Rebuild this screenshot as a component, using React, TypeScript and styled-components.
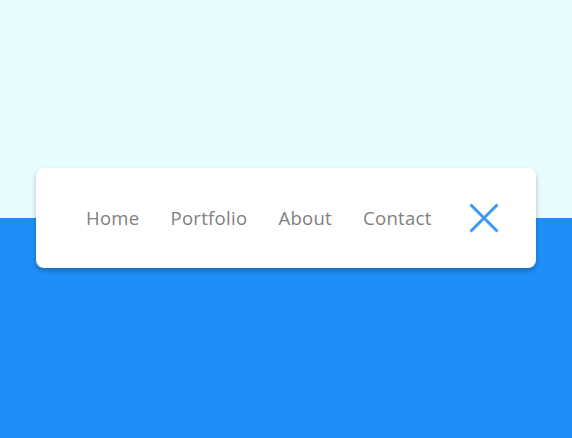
import React from "react";
import styled, { createGlobalStyle } from "styled-components";

const GlobalStyle = createGlobalStyle`
  html, body {
    margin: 0;
    padding: 0;
  }
  body {
    font-family: "Open Sans", "Liberation Sans", Arial, sans-serif;
  }
`;

const Page = styled.div`
  width: 572px;
  height: 438px;
  box-sizing: border-box;
  padding-top: 168px;
  display: flex;
  justify-content: center;
  align-items: flex-start;
  background: linear-gradient(to bottom, #e8fbff 0, #e8fbff 218px, #208ef9 218px, #208ef9 100%);
`;

const Card = styled.nav`
  width: 500px;
  height: 100px;
  box-sizing: border-box;
  background: #ffffff;
  border-radius: 8px;
  box-shadow: 0 3px 5px rgba(0, 0, 0, 0.25);
  display: flex;
  align-items: center;
  padding: 0 37px 0 50px;
`;

const Links = styled.ul`
  list-style: none;
  margin: 0 0 2px;
  padding: 0;
  display: flex;
  gap: 31px;
  flex: 1;
`;

const Link = styled.a`
  font-size: 18.5px;
  letter-spacing: 0.3px;
  color: #808080;
  text-decoration: none;
  cursor: pointer;
`;

const CloseButton = styled.button`
  width: 30px;
  height: 30px;
  padding: 0;
  border: none;
  background: none;
  display: flex;
  align-items: center;
  justify-content: center;
  cursor: pointer;
`;

const items = ["Home", "Portfolio", "About", "Contact"];

const App: React.FC = () => {
  return (
    <>
      <GlobalStyle />
      <Page>
        <Card>
          <Links>
            {items.map((item) => (
              <li key={item}>
                <Link>{item}</Link>
              </li>
            ))}
          </Links>
          <CloseButton aria-label="Close menu">
            <svg width="30" height="30" viewBox="0 0 30 30">
              <path d="M1.5 1.5 L28.5 28.5 M28.5 1.5 L1.5 28.5" stroke="#3a9af5" strokeWidth="3" />
            </svg>
          </CloseButton>
        </Card>
      </Page>
    </>
  );
};

export default App;
